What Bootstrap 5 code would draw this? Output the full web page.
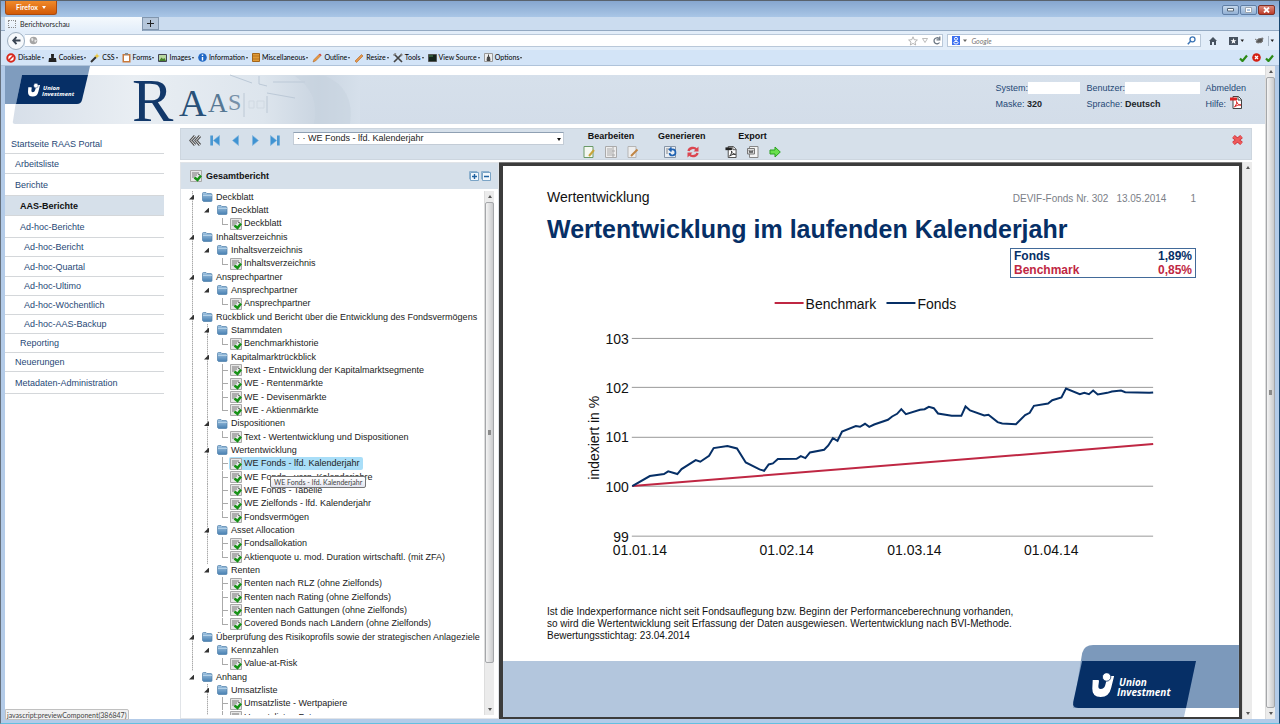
<!DOCTYPE html>
<html lang="de">
<head>
<meta charset="utf-8">
<meta name="viewport" content="width=device-width, initial-scale=1">
<title>Berichtvorschau</title>
<link href="https://cdn.jsdelivr.net/npm/bootstrap@5.3.0/dist/css/bootstrap.min.css" rel="stylesheet">
<style>
body{font:9px/12px "Liberation Sans",Arial,sans-serif;color:#222;background:#b3cbe8;border-top:1px solid #59626d;border-left:1px solid #66717e;border-right:1px solid #17466f;border-bottom:1px solid #63bfe0}
a{color:#1f4876;text-decoration:none}
button{border:0;padding:0;background:none;line-height:1}
svg{display:block;flex:none}
.chrome{font:7px/10px Lato,"Open Sans",sans-serif;color:#222}
.titlebar{height:16px;background:linear-gradient(#86a6cf,#a9c6e6);padding:0 4px}
.ff{width:52px;height:14px;background:linear-gradient(#f08a2a,#d35a08);border:1px solid #a94a10;border-top:0;border-radius:0 0 3px 3px;color:#fff;font-size:7px;font-weight:700}
.ff:after{content:"";border:2px solid transparent;border-top:3px solid #fff;border-bottom:0}
.wins{gap:1px}
.winbtn{width:17px;height:10px;border:1px solid #5f7ea5;border-radius:2px;background:linear-gradient(#c6d8ec,#92b0d4)}
.winbtn.shut{background:linear-gradient(#dc8a7c,#bc3a28);border-color:#803026}
.tabs{height:14px;background:#cbdcef;padding:0 4px;border-bottom:1px solid #93a9c2}
.tab{width:138px;height:14px;background:linear-gradient(#f5f9fd,#e3eefa);border-right:1px solid #8296ad;padding-left:3px}
.plus{width:16px;height:13px;background:#b5c6da;border:1px solid #8296ad;border-left:0}
.favi{width:8px;height:8px;border:1px dotted #8c8c8c}
.navrow{height:19px;background:#e2edf9;padding:0 4px 0 6px}
.box{height:13px;background:#fff;border:1px solid #b9c8d9}
.box input{border:0;outline:0;padding:0;background:none;min-width:0;height:11px;font-style:italic}
.back{width:18px;height:18px;border-radius:9px;background:#f6f9fc;border:1px solid #9daebf}
.finder{width:20%}
.devbar{height:16px;background:#d3e4f7;padding:0 5px 0 5px;border-bottom:1px solid #afc3da}
.devbar button{display:flex;align-items:center;gap:2px}
.devbar button:after{content:"";border:1px solid transparent;border-top:2px solid #333;border-bottom:0;margin-left:-1px}
.page-area{background:#fff;margin:0 4px 4px 4px;min-height:0}
.sbar{width:10px;background:#ebebeb;border-left:1px solid #ddd}
.sbar .thumb{width:9px;background:linear-gradient(90deg,#f4f4f4,#c9cacc);border:1px solid #a5a7aa;border-radius:2px}
.arr{width:0;height:0;border:2px solid transparent;border-top:0;border-bottom:3px solid #555;margin:4px auto}
.arr.dn{border-top:3px solid #555;border-bottom:0}
.masthead{height:58px}
.masthead svg{overflow:visible}
.masthead .fill{background:linear-gradient(#fff 9px,#d6e0eb 9px,#d3dde9);padding-right:19px}
.meta{color:#1f4876;padding-top:14px;line-height:16px}
.meta .line2{height:16px}
.meta input{border:0;height:12px;background:#fff;padding:0}
.sidenav{width:159px;padding-top:10px}
.sidenav a{display:flex;align-items:center;height:19px;border-bottom:1px solid #d4d7da;padding-left:10px}
.sidenav .r20{height:20px}.sidenav .r22{height:22px}
.sidenav .l0{padding-left:6px}.sidenav .l1{padding-left:15px}.sidenav .l2{padding-left:19px}
.sidenav a.cur{font-weight:700;background:#d6e0ea;color:#111}
.work{margin:4px 13px 0 16px;gap:2px}
.toolbar{height:32px;background:#d6e0ea;border:1px solid #cdd6df;padding:0 7px 0 4px}
.pager{padding-top:6px}
.pager button{width:20px;display:flex;justify-content:center}
.toolbar select{width:271px;height:13px;border:1px solid #c3ccd6;border-top-color:#8fa0b3;background:#fff;padding:0 0 0 3px;font-size:9px;line-height:11px;color:#222;appearance:none}
.pick{padding-top:3px}
.pick:after{content:"";position:absolute;right:3px;top:9px;border:2px solid transparent;border-top:3px solid #111;border-bottom:0}
.grp{font-weight:700;color:#111;padding-top:1px;margin-left:19px}
.grp .icons{display:flex;justify-content:center;gap:10px;padding-top:4px}
.treebox{width:319px;border:1px solid #e1e4e8}
.treehead{height:26px;background:#d6e0ea;font-weight:700;color:#111;padding:0 7px 0 9px}
.treewrap{padding:2px 4px 3px 0}
.tree{list-style:none;margin:0;padding:0}
.tree li{height:13px;display:flex;align-items:center;white-space:nowrap;background:no-repeat 11px 0/1px 100% repeating-linear-gradient(#aaa 0 1px,#ddd 1px 2px)}
.tree li:nth-child(3n){height:14px}
.tree li.v{background:no-repeat 11px 0/1px 100% repeating-linear-gradient(#aaa 0 1px,#ddd 1px 2px),no-repeat 26px 0/1px 100% repeating-linear-gradient(#aaa 0 1px,#ddd 1px 2px)}
.tree li.z{background:none}
.tree li.z.v{background:no-repeat 26px 0/1px 100% repeating-linear-gradient(#aaa 0 1px,#ddd 1px 2px)}
.tree a{color:#222;padding:0 3px 0 1px;line-height:13px;display:flex;align-items:center;gap:3px;border-radius:2px}
.tree li:before{content:"";width:5px;height:5px;background:#333;clip-path:polygon(100% 0,100% 100%,0 100%);margin:0 7px 0 8px;flex:none}
.tree li.b:before{margin-left:23px}
.tree li.c:before{clip-path:none;background:none;width:6px;height:7px;border-left:1px solid #aaa;border-bottom:1px solid #aaa;margin:0 1px 5px 41px}
.tree li.t:before{height:13px;margin-bottom:0;border-bottom:0;background:no-repeat 0 6px/6px 1px linear-gradient(#aaa,#aaa)}
.tree .c a{gap:2px}
.tree a.hit{background:#a9def8}
.tip{left:89px;top:313px;height:12px;padding:0 3px;background:linear-gradient(#fff,#e3e5ef);border:1px solid #777;border-radius:2px;font:7px/10px Lato,sans-serif;color:#444;white-space:nowrap}
.frame{background:#3c3c3c;border-top:1px solid #7c7c7c;padding:3px 3px 2px 4px}
.sheet{background:#fff;color:#111;padding-top:22px;overflow:hidden}
.inset{padding:0 43px 0 44px}
.sub{font-size:14px;line-height:18px;height:18px}
.docinfo{font-size:10px;color:#7b8087;line-height:22px}
.headline{font-size:25px;line-height:32px;font-weight:700;color:#062f66;margin:7px 0 3px}
.perf{width:186px;border:1px solid #426a99;font-size:12px;line-height:14px;font-weight:700;margin-bottom:12px}
.perf th,.perf td{padding:0 3px}
.navy{color:#062f66}.crim{color:#bf2743}
.foot{font-size:10px;line-height:12px;margin-top:42px}
.chart text{font-size:14px;fill:#111}
.chart line{stroke:#999}
.status{left:4px;bottom:3px;height:11px;border:1px solid #c0c0c0;background:#f1f1f1;color:#444;padding:0 1px;border-radius:0 2px 0 0}
.grip{width:3px;height:5px;background:#8a8a8a;margin:auto}
</style>
</head>
<body class="vh-100 d-flex flex-column overflow-hidden position-relative">
<svg width="0" height="0" class="position-absolute" aria-hidden="true">
<defs><linearGradient id="fg" x2="0" y2="1"><stop stop-color="#a5c7e3"/><stop offset="1" stop-color="#4880b2"/></linearGradient></defs>
<symbol id="fo" viewBox="0 0 11 10"><path d="M.5 8.500V1.500Q.5.500 1.500.500H4L5 1.500H9Q10 1.500 10 3V8.500Q10 9.500 9 9.500H1.500Z" fill="url(#fg)" stroke="#4f80aa" stroke-width=".7"/><path d="M1 3.500H10" stroke="#bfd8eb" stroke-width=".8"/></symbol>
<symbol id="ck" viewBox="0 0 12 12"><path d="M.5.500H11.500V11.500H.5Z" fill="#e6e6e6" stroke="#a8a8a8"/><path d="M2 3H9M2 5H7M2 7H5M8 4.500H10" stroke="#777"/><path d="M4.500 7.500 7.500 10 11 5.500" fill="none" stroke="#169216" stroke-width="2.500"/></symbol>
<symbol id="tri" viewBox="0 0 7 11"><path d="M.5 5.500 6.500.5V10.500Z" fill="#3f93d2" stroke="#7db4dd" stroke-width=".6"/></symbol>
<symbol id="end" viewBox="0 0 10 11"><path d="M.3.500H3V10.500H.3Z" fill="#4b98d2"/><path d="M3.300 5.500 9.500.5V10.500Z" fill="#3f93d2" stroke="#7db4dd" stroke-width=".6"/></symbol>
<symbol id="pdf" viewBox="0 0 12 13"><path d="M3 .5H8.500L11.500 3.500V12.500H3Z" fill="#fff" stroke="#444"/><path d="M8 .5V4H11.500" fill="none" stroke="#444"/><path d="M0 1.500H7V4.500H0Z" fill="currentColor"/><path d="M4.500 11C7 8 7 6 6.500 5.500 7 8 9 9 11 9 8 8.500 6 10 4.500 11Z" fill="none" stroke="currentColor"/></symbol>
<symbol id="ok" viewBox="0 0 9 8"><path d="M1 4.500 3.500 7 8 1.500" fill="none" stroke="#2b8a16" stroke-width="2.200"/></symbol>
<symbol id="pen" viewBox="0 0 10 10"><path d="M1 9 2 6.500 7.500 1 9 2.500 3.500 8Z" fill="#ea9a43" stroke="#a35a1c" stroke-width=".5"/><path d="M7.500 1 9 2.500" stroke="#d64343" stroke-width="1.500"/></symbol>
<symbol id="ui" viewBox="0 0 22 24"><path d="M.5 7H6Q7 7 6.800 8.500L6.200 13Q6 16 8.500 16 12 16 13 12.500L15 5Q16 3 17.500 3H22L19 15Q17 24 8.500 24 0 24 0 15.500Z" fill="#fff"/><circle cx="14.500" cy="4" r="4.200" fill="#fff" stroke="#062f66" stroke-width=".8"/></symbol>
</svg>

<header class="chrome">
<div class="titlebar d-flex justify-content-between">
<button class="ff d-flex align-items-center justify-content-center gap-1">Firefox</button>
<div class="wins d-flex pt-1">
<button class="winbtn d-flex align-items-center justify-content-center" aria-label="Minimieren"><svg width="7" height="4"><path d="M.5.500H6.500V3H.5Z" fill="#fff" stroke="#567"/></svg></button>
<button class="winbtn d-flex align-items-center justify-content-center" aria-label="Maximieren"><svg width="7" height="6"><path d="M1 1H6V5H1Z" fill="none" stroke="#fff" stroke-width="2"/><path d="M.5.500H6.500V5.500H.5Z" fill="none" stroke="#567" stroke-width=".6"/></svg></button>
<button class="winbtn shut d-flex align-items-center justify-content-center" aria-label="Schließen"><svg width="7" height="6"><path d="M1 .5 6 5.500M6 .5 1 5.500" stroke="#fff" stroke-width="1.800"/></svg></button>
</div></div>
<div class="tabs d-flex">
<div class="tab d-flex align-items-center"><span class="favi me-1"></span><span>Berichtvorschau</span></div>
<button class="plus d-flex align-items-center justify-content-center" aria-label="Neuer Tab"><svg width="7" height="7"><path d="M3.500 0V7M0 3.500H7" stroke="#222" stroke-width="1"/></svg></button>
</div>
<div class="navrow d-flex align-items-center">
<button class="back d-flex align-items-center justify-content-center" aria-label="Zurück"><svg width="9" height="9"><path d="M4.500.8 1.200 4.500 4.500 8.200M1.500 4.500H8.500" fill="none" stroke="#3b4654" stroke-width="1.900"/></svg></button>
<div class="box d-flex align-items-center flex-fill border-start-0 gap-1 ps-1">
<svg width="9" height="9"><circle cx="4.500" cy="4.500" r="3.800" fill="#a5a5a5"/><path d="M2 2.500 4 2 4.500 4 3 5.500ZM5.500 3.500 8 4 6.500 6.500 5.500 6Z" fill="#e6e6e6"/></svg>
<input type="text" class="flex-fill" aria-label="Adresse">
<svg width="10" height="10"><path d="M5 .8 6.200 3.700 9.400 4 7 6 7.700 9 5 7.400 2.300 9 3 6 .6 4 3.800 3.700Z" fill="none" stroke="#a4a4a4" stroke-width=".8"/></svg>
<svg width="6" height="5"><path d="M.5.500H5.500L3 4.500Z" fill="none" stroke="#aaa" stroke-width=".8"/></svg>
<svg width="10" height="9"><path d="M7.500 6.500A3 3 0 1 1 7 2.500M7.800.5V3.800H4.500" fill="none" stroke="#6a7683" stroke-width="1.300"/></svg>
</div>
<div class="box finder d-flex align-items-center ms-1">
<svg width="19" height="9" class="ms-1"><path d="M0 0H8V9H0Z" fill="#3c6ff0"/><circle cx="4" cy="2.800" r="1.500" fill="none" stroke="#fff"/><ellipse cx="4" cy="6.700" rx="2.200" ry="1.300" fill="none" stroke="#fff"/><path d="M11 3.500H15L13 6Z" fill="#666"/></svg>
<input type="text" class="flex-fill" placeholder="Google" aria-label="Suche">
<svg width="9" height="9" class="me-1"><circle cx="5.500" cy="3.300" r="2.500" fill="none" stroke="#3b74b5" stroke-width="1.300"/><path d="M3.800 5 .8 8.200" stroke="#3b74b5" stroke-width="1.500"/></svg>
</div>
<svg width="66" height="12" class="ms-2"><path d="M0 6 4 2 8 6H7V10H5V7H3V10H1V6Z" fill="#47525f"/><path d="M20 2H29V10H20Z" fill="#47525f"/><path d="M24.500 3 25.300 5.200H27.500L25.700 6.500 26.400 8.700 24.500 7.400 22.600 8.700 23.300 6.500 21.500 5.200H23.700Z" fill="#fff"/><path d="M31.500 4.500H35L33.300 7ZM61.500 4.500H65L63.300 7Z" fill="#222"/><path d="M47 7 49 4 54 3 53 7 49 8ZM46 4 49 6M51 8 54 6" fill="#555" stroke="#777"/><path d="M59.500 1V11" stroke="#aab7c5"/></svg>
</div>
<div class="devbar d-flex justify-content-between align-items-center">
<div class="d-flex gap-1">
<button><svg width="10" height="10"><circle cx="5" cy="5" r="3.700" fill="#fff" stroke="#d8281c" stroke-width="2"/><path d="M2.500 7.500 7.500 2.500" stroke="#d8281c" stroke-width="1.600"/></svg>Disable</button>
<button><svg width="9" height="10"><path d="M3 1H6L5.800 5H8L8.500 9H.5L1 5H3.200Z" fill="#222"/></svg>Cookies</button>
<button><svg width="10" height="10"><path d="M1 9 6 4" stroke="#333" stroke-width="2"/><path d="M7 0 7.700 2.300 10 3 7.700 3.700 7 6 6.300 3.700 4 3 6.300 2.300Z" fill="#eec52b"/></svg>CSS</button>
<button><svg width="9" height="10"><path d="M.5 1H8.500V9.500H.5Z" fill="#c8783a"/><path d="M2 2.500H7V8H2Z" fill="#fff"/><path d="M3 0H6V2H3Z" fill="#888"/></svg>Forms</button>
<button><svg width="9" height="8"><path d="M.5.500H8.500V7.500H.5Z" fill="#b7d6a0" stroke="#445"/><path d="M1 7 3.500 3.500 5 5 6.500 4 8 7Z" fill="#46802a"/></svg>Images</button>
<button><svg width="9" height="9"><circle cx="4.500" cy="4.500" r="4.300" fill="#2168c4"/><path d="M4.500 1.500V3M4.500 4V7.500" stroke="#fff" stroke-width="1.400"/></svg>Information</button>
<button><svg width="8" height="9"><path d="M.5.500H7.500V8.500H.5Z" fill="#e09a36" stroke="#a3651a"/><path d="M1 3H7M1 6H7" stroke="#a3651a" stroke-width=".7"/></svg>Miscellaneous</button>
<button><svg width="10" height="10"><use href="#pen"/></svg>Outline</button>
<button><svg width="10" height="10"><path d="M1 8 7.500 1.500 9 3 2.500 9.500Z" fill="#e6974a" stroke="#b0631f" stroke-width=".6"/></svg>Resize</button>
<button><svg width="10" height="10"><path d="M1 1 9 9M9 1 1 9" stroke="#444" stroke-width="1.700"/><path d="M.5 2.500 3 .5M7.500 1 9 3" stroke="#888" stroke-width="1.500"/></svg>Tools</button>
<button><svg width="9" height="8"><path d="M.5.500H8.500V7.500H.5Z" fill="#14241a" stroke="#555"/><path d="M1 2H5" stroke="#4d8a55"/></svg>View Source</button>
<button><svg width="9" height="9"><path d="M.5.500H8.500V8.500H.5Z" fill="#eee" stroke="#999"/><path d="M4.500 1.500V4M3 7.500H6L5.500 4H3.500Z" fill="#444" stroke="#444"/></svg>Options</button>
</div>
<div class="d-flex align-items-center gap-1"><svg width="9" height="8"><use href="#ok"/></svg><svg width="9" height="9"><circle cx="4.500" cy="4.500" r="4.300" fill="#d42014"/><path d="M3 3 6 6M6 3 3 6" stroke="#fff" stroke-width="1.300"/></svg><svg width="9" height="8"><use href="#ok"/></svg></div>
</div>
</header>

<div class="page-area flex-fill d-flex">
<div class="flex-fill d-flex flex-column" style="min-width:0">
<div class="masthead d-flex">
<svg width="355" height="58" viewBox="0 0 355 58" role="img" aria-label="Union Investment RAAS">
<defs><linearGradient id="bg"><stop stop-color="#d7dfe9"/><stop offset=".35" stop-color="#e9eef3"/><stop offset=".72" stop-color="#dde5ed"/><stop offset=".88" stop-color="#cad5e1"/><stop offset="1" stop-color="#d6e0eb"/></linearGradient></defs>
<path d="M15 9H355V58H10Q7 58 8 55Z" fill="url(#bg)"/>
<path d="M225 9 247 17M254 10V18L262 20M268 16H300M262 27 290 32" stroke="#bcc9d7" fill="none"/>
<path d="M320 10Q350 22 345 58H309Q316 28 290 10Z" fill="#c5d1dd" opacity=".5"/>
<path d="M0 0H85L83 9H17L11 38H0Z" fill="#7f9cbe"/>
<path d="M17 9H83L77 34Q76 38 72 38H11Z" fill="#062f66"/>
<use href="#ui" x="23" y="17" width="12" height="14"/>
<g fill="#fff" font-family="Open Sans,sans-serif" font-weight="700" font-style="italic" font-size="6"><text x="38" y="24">Union</text><text x="37" y="30">Investment</text></g>
<g font-family="Liberation Serif,serif" fill="#12386a"><text x="127" y="55" font-size="62">R</text><text x="174" y="50" font-size="38" fill="#285078">A</text><text x="203" y="46" font-size="27" fill="#567894">A</text><text x="223" y="44" font-size="24" fill="#7690a8">S</text></g>
<path d="M239 27V51M262 30V47" stroke="#bcc8d5"/><path d="M244 35H249V42H244ZM252 35H259V42H252Z" fill="none" stroke="#d0d9e2"/>
</svg>
<div class="fill flex-fill d-flex justify-content-end">
<div class="meta d-flex">
<div style="width:91px"><div class="d-flex align-items-center"><label for="sys">System:</label><input id="sys" style="width:52px"></div><div class="line2">Maske: <b class="text-dark">320</b></div></div>
<div style="width:119px"><div class="d-flex align-items-center"><label for="usr">Benutzer:</label><input id="usr" style="width:75px"></div><div class="line2">Sprache: <b class="text-dark">Deutsch</b></div></div>
<div><a href="#">Abmelden</a><div class="d-flex gap-1"><a href="#">Hilfe:</a><svg width="12" height="13" style="color:#d92222"><use href="#pdf"/></svg></div></div>
</div></div>
</div>

<div class="d-flex flex-fill" style="min-height:0">
<nav class="sidenav flex-shrink-0">
<a href="#" class="r20 l0">Startseite RAAS Portal</a>
<a href="#" class="r20">Arbeitsliste</a>
<a href="#" class="r22">Berichte</a>
<a href="#" class="r20 l1 cur">AAS-Berichte</a>
<a href="#" class="r22 l1">Ad-hoc-Berichte</a>
<a href="#" class="l2">Ad-hoc-Bericht</a>
<a href="#" class="r20 l2">Ad-hoc-Quartal</a>
<a href="#" class="l2">Ad-hoc-Ultimo</a>
<a href="#" class="l2">Ad-hoc-Wöchentlich</a>
<a href="#" class="l2">Ad-hoc-AAS-Backup</a>
<a href="#" class="l1">Reporting</a>
<a href="#">Neuerungen</a>
<a href="#" class="r22">Metadaten-Administration</a>
</nav>

<main class="work flex-fill d-flex flex-column" style="min-width:0">
<div class="toolbar d-flex">
<div class="pager d-flex align-items-start me-2">
<button aria-label="Zurück"><svg width="13" height="11"><path d="M6 1 2 5.500 6 10M11 1 7 5.500 11 10" fill="none" stroke="#555" stroke-width="3"/><path d="M6 1 2 5.500 6 10M11 1 7 5.500 11 10" fill="none" stroke="#e4e4e4"/></svg></button>
<button aria-label="Erste"><svg width="10" height="11"><use href="#end"/></svg></button>
<button aria-label="Vorige"><svg width="7" height="11"><use href="#tri"/></svg></button>
<button aria-label="Nächste"><svg width="7" height="11"><use href="#tri" transform="rotate(180 3.500 5.500)"/></svg></button>
<button aria-label="Letzte"><svg width="10" height="11"><use href="#end" transform="rotate(180 5 5.500)"/></svg></button>
</div>
<div class="pick position-relative"><select aria-label="Komponente"><option>· · WE Fonds - lfd. Kalenderjahr</option></select></div>
<div class="grp text-center"><div>Bearbeiten</div>
<div class="icons">
<button aria-label="Bearbeiten"><svg width="12" height="12"><path d="M1 .5H10V11.500H1Z" fill="#f4f8f1" stroke="#6a9a68"/><path d="M6 10 11 4" stroke="#c7a43b" stroke-width="2"/></svg></button>
<button aria-label="Eigenschaften"><svg width="12" height="12"><path d="M.5.500H11.500V11.500H.5Z" fill="#eee" stroke="#aaa"/><path d="M2 3H7M2 5H10M2 7H7M2 9H10M8 1V11" stroke="#aaa"/></svg></button>
<button aria-label="Notiz"><svg width="12" height="12"><path d="M1 .5H9V11.500H1Z" fill="#eee" stroke="#b5b5b5"/><path d="M4 10 10.500 3.500" stroke="#c08543" stroke-width="2"/></svg></button></div></div>
<div class="grp text-center"><div>Generieren</div>
<div class="icons">
<button aria-label="Generieren"><svg width="13" height="12"><path d="M.5.500H11.500V11.500H.5Z" fill="#e9eef3" stroke="#8796a8"/><path d="M2 3H5M2 5H4M2 7H4" stroke="#888"/><path d="M5.500 7A3 3 0 1 0 8 3.500H6M7.500 1.500 5.500 3.500 7.500 5.500" fill="none" stroke="#1f62b2" stroke-width="1.700"/></svg></button>
<button aria-label="Aktualisieren"><svg width="12" height="12"><path d="M1.500 5A4.500 4 0 0 1 9.500 3.500M10.500 7A4.500 4 0 0 1 2.500 8.500" fill="none" stroke="#db4650" stroke-width="2.400"/><path d="M11.500.5V5.500H6.500ZM.5 11.500V6.500H5.500Z" fill="#db4650"/></svg></button></div></div>
<div class="grp text-center"><div>Export</div>
<div class="icons">
<button aria-label="PDF"><svg width="12" height="12" style="color:#222"><use href="#pdf"/></svg></button>
<button aria-label="Word"><svg width="12" height="12"><path d="M2.500.5H11V11.500H2.500Z" fill="#f4f4f4" stroke="#888"/><path d="M.5 2.500H7.500V8H.5Z" fill="#ddd" stroke="#777"/><path d="M2 4 3 7 4 4.500 5 7 6 4" fill="none" stroke="#444" stroke-width=".8"/></svg></button>
<button aria-label="Exportieren"><svg width="12" height="12"><path d="M1 4H6V1L11.300 6 6 11V8H1Z" fill="#6ae04c" stroke="#2aa021"/></svg></button></div></div>
<button class="ms-auto align-self-start pt-1" aria-label="Schließen"><svg width="13" height="13"><path d="M2.500 3.500 10.500 10.500M10.500 3.500 2.500 10.500" stroke="#c9303a" stroke-width="4"/><path d="M2.500 3.500 10.500 10.500M10.500 3.500 2.500 10.500" stroke="#ee5a5a" stroke-width="2.500"/></svg></button>
</div>

<div class="d-flex flex-fill" style="min-height:0">
<section class="treebox flex-shrink-0 d-flex flex-column position-relative">
<div class="treehead d-flex align-items-center flex-shrink-0"><svg width="12" height="12" class="me-1"><use href="#ck"/></svg><span>Gesamtbericht</span>
<svg width="22" height="10" class="ms-auto"><path d="M.5.500H8V8H.5ZM12.500.5H20V8H12.500Z" fill="#dcebf7" stroke="#8eb1ce"/><path d="M1.500 1.500H9.500V9.500H1.500ZM13.500 1.500H21.500V9.500H13.500Z" fill="#f2f8fd" stroke="#7ba4c6"/><path d="M3 5.500H8M5.500 3V8M15 5.500H20" stroke="#2162a0" stroke-width="1.400"/></svg></div>
<div class="treewrap d-flex flex-fill" style="min-height:0">
<ul class="tree flex-fill overflow-hidden">
<li><a href="#"><svg width="11" height="10"><use href="#fo"/></svg>Deckblatt</a></li>
<li class="b"><a href="#"><svg width="11" height="10"><use href="#fo"/></svg>Deckblatt</a></li>
<li class="c"><a href="#"><svg width="12" height="12"><use href="#ck"/></svg>Deckblatt</a></li>
<li><a href="#"><svg width="11" height="10"><use href="#fo"/></svg>Inhaltsverzeichnis</a></li>
<li class="b"><a href="#"><svg width="11" height="10"><use href="#fo"/></svg>Inhaltsverzeichnis</a></li>
<li class="c"><a href="#"><svg width="12" height="12"><use href="#ck"/></svg>Inhaltsverzeichnis</a></li>
<li><a href="#"><svg width="11" height="10"><use href="#fo"/></svg>Ansprechpartner</a></li>
<li class="b"><a href="#"><svg width="11" height="10"><use href="#fo"/></svg>Ansprechpartner</a></li>
<li class="c"><a href="#"><svg width="12" height="12"><use href="#ck"/></svg>Ansprechpartner</a></li>
<li><a href="#"><svg width="11" height="10"><use href="#fo"/></svg>Rückblick und Bericht über die Entwicklung des Fondsvermögens</a></li>
<li class="b v"><a href="#"><svg width="11" height="10"><use href="#fo"/></svg>Stammdaten</a></li>
<li class="c v"><a href="#"><svg width="12" height="12"><use href="#ck"/></svg>Benchmarkhistorie</a></li>
<li class="b v"><a href="#"><svg width="11" height="10"><use href="#fo"/></svg>Kapitalmarktrückblick</a></li>
<li class="c t v"><a href="#"><svg width="12" height="12"><use href="#ck"/></svg>Text - Entwicklung der Kapitalmarktsegmente</a></li>
<li class="c t v"><a href="#"><svg width="12" height="12"><use href="#ck"/></svg>WE - Rentenmärkte</a></li>
<li class="c t v"><a href="#"><svg width="12" height="12"><use href="#ck"/></svg>WE - Devisenmärkte</a></li>
<li class="c v"><a href="#"><svg width="12" height="12"><use href="#ck"/></svg>WE - Aktienmärkte</a></li>
<li class="b v"><a href="#"><svg width="11" height="10"><use href="#fo"/></svg>Dispositionen</a></li>
<li class="c v"><a href="#"><svg width="12" height="12"><use href="#ck"/></svg>Text - Wertentwicklung und Dispositionen</a></li>
<li class="b v"><a href="#"><svg width="11" height="10"><use href="#fo"/></svg>Wertentwicklung</a></li>
<li class="c t v"><a href="#" class="hit"><svg width="12" height="12"><use href="#ck"/></svg>WE Fonds - lfd. Kalenderjahr</a></li>
<li class="c t v"><a href="#"><svg width="12" height="12"><use href="#ck"/></svg>WE Fonds - verg. Kalenderjahre</a></li>
<li class="c t v"><a href="#"><svg width="12" height="12"><use href="#ck"/></svg>WE Fonds - Tabelle</a></li>
<li class="c t v"><a href="#"><svg width="12" height="12"><use href="#ck"/></svg>WE Zielfonds - lfd. Kalenderjahr</a></li>
<li class="c v"><a href="#"><svg width="12" height="12"><use href="#ck"/></svg>Fondsvermögen</a></li>
<li class="b v"><a href="#"><svg width="11" height="10"><use href="#fo"/></svg>Asset Allocation</a></li>
<li class="c t v"><a href="#"><svg width="12" height="12"><use href="#ck"/></svg>Fondsallokation</a></li>
<li class="c v"><a href="#"><svg width="12" height="12"><use href="#ck"/></svg>Aktienquote u. mod. Duration wirtschaftl. (mit ZFA)</a></li>
<li class="b"><a href="#"><svg width="11" height="10"><use href="#fo"/></svg>Renten</a></li>
<li class="c t"><a href="#"><svg width="12" height="12"><use href="#ck"/></svg>Renten nach RLZ (ohne Zielfonds)</a></li>
<li class="c t"><a href="#"><svg width="12" height="12"><use href="#ck"/></svg>Renten nach Rating (ohne Zielfonds)</a></li>
<li class="c t"><a href="#"><svg width="12" height="12"><use href="#ck"/></svg>Renten nach Gattungen (ohne Zielfonds)</a></li>
<li class="c"><a href="#"><svg width="12" height="12"><use href="#ck"/></svg>Covered Bonds nach Ländern (ohne Zielfonds)</a></li>
<li><a href="#"><svg width="11" height="10"><use href="#fo"/></svg>Überprüfung des Risikoprofils sowie der strategischen Anlageziele</a></li>
<li class="b"><a href="#"><svg width="11" height="10"><use href="#fo"/></svg>Kennzahlen</a></li>
<li class="c"><a href="#"><svg width="12" height="12"><use href="#ck"/></svg>Value-at-Risk</a></li>
<li class="z"><a href="#"><svg width="11" height="10"><use href="#fo"/></svg>Anhang</a></li>
<li class="b z v"><a href="#"><svg width="11" height="10"><use href="#fo"/></svg>Umsatzliste</a></li>
<li class="c t z v"><a href="#"><svg width="12" height="12"><use href="#ck"/></svg>Umsatzliste - Wertpapiere</a></li>
<li class="c t z v"><a href="#"><svg width="12" height="12"><use href="#ck"/></svg>Umsatzliste - Futures</a></li>
</ul>
<div class="sbar d-flex flex-column flex-shrink-0"><i class="arr"></i><div class="thumb d-flex" style="height:88%"><i class="grip"></i></div><i class="arr dn mt-auto"></i></div>
</div>
<div class="tip position-absolute">WE Fonds - lfd. Kalenderjahr</div>
</section>

<section class="frame flex-fill d-flex" style="min-width:0">
<div class="sheet flex-fill d-flex flex-column" style="min-width:0">
<div class="inset">
<div class="sub d-flex justify-content-between"><span>Wertentwicklung</span><span class="docinfo d-flex"><span>DEVIF-Fonds Nr. 302</span><span class="ms-2">13.05.2014</span><span class="ms-4">1</span></span></div>
<h1 class="headline text-nowrap">Wertentwicklung im laufenden Kalenderjahr</h1>
<table class="perf ms-auto"><tbody><tr class="navy"><th>Fonds</th><td class="text-end">1,89%</td></tr><tr class="crim"><th>Benchmark</th><td class="text-end">0,85%</td></tr></tbody></table>
</div>
<svg class="chart w-100" viewBox="0 0 737 275" role="img" aria-label="Wertentwicklung indexiert in %">
<path d="M272 13H301" stroke="#bf2743" stroke-width="2"/><text x="303" y="19">Benchmark</text>
<path d="M384 13H413" stroke="#062f66" stroke-width="2"/><text x="415" y="19">Fonds</text>
<g><line x1="129" x2="651" y1="48.500" y2="48.500"/><line x1="129" x2="651" y1="97.500" y2="97.500"/><line x1="129" x2="651" y1="147.500" y2="147.500"/><line x1="129" x2="651" y1="196.500" y2="196.500"/><line x1="129" x2="651" y1="246.500" y2="246.500"/></g>
<g text-anchor="end"><text x="126" y="54">103</text><text x="126" y="103">102</text><text x="126" y="152">101</text><text x="126" y="202">100</text><text x="126" y="252">99</text></g>
<g text-anchor="middle"><text x="137" y="265">01.01.14</text><text x="284" y="265">01.02.14</text><text x="412" y="265">01.03.14</text><text x="549" y="265">01.04.14</text></g>
<text transform="translate(96 148) rotate(-90)" text-anchor="middle">indexiert in %</text>
<g transform="translate(77 30) scale(.3827 .3333)" fill="none" stroke-width="2">
<path vector-effect="non-scaling-stroke" stroke="#bf2743" d="M137 499 1500 373"/>
<path vector-effect="non-scaling-stroke" stroke="#062f66" d="M137 499 183 469 220 463 231 455 255 463 266 448 303 421 315 426 338 408 350 385 386 379 411 386 434 428 470 449 482 453 494 434 505 431 518 418 567 417 578 409 590 415 602 398 639 390 650 377 662 355 674 363 686 335 722 319 733 321 746 312 757 321 770 314 806 300 817 290 830 282 841 268 853 283 890 270 902 268 913 261 926 265 937 281 973 288 998 288 1009 260 1021 272 1058 287 1069 285 1093 307 1105 311 1141 313 1165 286 1177 279 1188 258 1225 251 1236 241 1260 233 1272 206 1308 223 1320 219 1332 223 1343 212 1355 224 1380 219 1392 215 1416 212 1427 217 1490 219 1500 218"/></g>
</svg>
<div class="inset foot text-nowrap">Ist die Indexperformance nicht seit Fondsauflegung bzw. Beginn der Performanceberechnung vorhanden,<br>so wird die Wertentwicklung seit Erfassung der Daten ausgewiesen. Wertentwicklung nach BVI-Methode.<br>Bewertungsstichtag: 23.04.2014</div>
<svg class="w-100 mt-auto" viewBox="0 0 737 72" role="img" aria-label="Union Investment">
<path d="M0 16H694L682 72H0Z" fill="#b3c6dd"/>
<path d="M571 63 580 8Q582 0 591 0H737V63Z" fill="#7c99bb"/>
<path d="M580 16H694L684 63H576Q570 63 571 57Z" fill="#062f66"/>
<use href="#ui" x="590" y="28" width="22" height="24"/>
<g fill="#fff" font-family="Open Sans,sans-serif" font-weight="700" font-style="italic" font-size="10"><text x="617" y="41">Union</text><text x="615" y="51">Investment</text></g>
</svg>
</div>
</section>
<div class="sbar d-flex flex-column flex-shrink-0"><i class="arr"></i><i class="arr dn mt-auto"></i></div>
</div>
</main>
</div>
</div>
<div class="sbar d-flex flex-column flex-shrink-0"><i class="arr"></i><div class="thumb d-flex flex-fill"><i class="grip"></i></div><i class="arr dn"></i></div>
</div>
<div class="status chrome position-absolute">javascript:previewComponent(386847)</div>
<script src="https://cdn.jsdelivr.net/npm/bootstrap@5.3.0/dist/js/bootstrap.bundle.min.js"></script>
</body>
</html>
